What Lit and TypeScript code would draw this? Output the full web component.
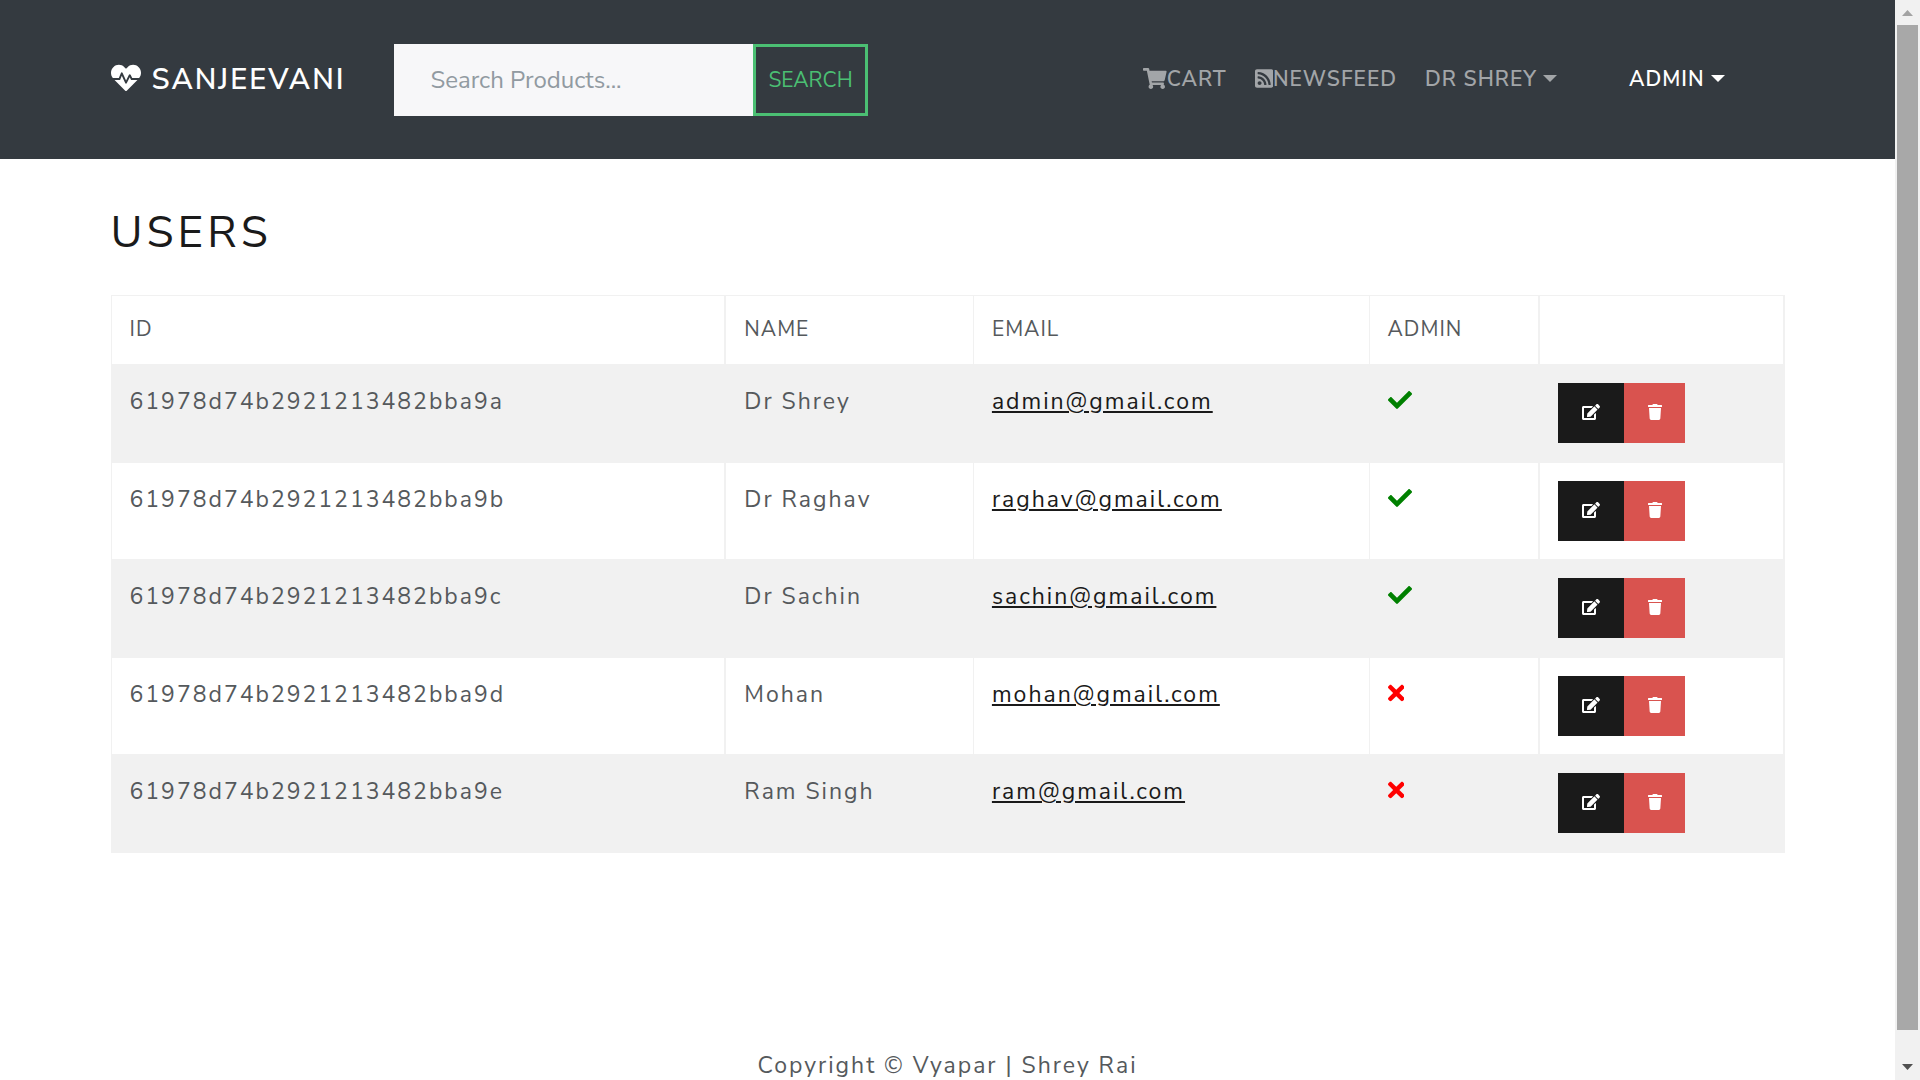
import { LitElement, html, css, svg } from "lit";
import { customElement, state } from "lit/decorators.js";

interface Icon {
  width: number;
  path: string;
}

const ICONS: Record<string, Icon> = {
  heartbeat: {
    width: 512,
    path: "M320.2 243.8l-49.7 99.4c-6 12.1-23.4 11.7-28.9-.6l-56.9-126.3-30 71.7H60.6l182.5 186.5c7.1 7.3 18.6 7.3 25.7 0L451.4 288H342.3l-22.1-44.2zM473.7 73.9l-2.4-2.5c-51.5-52.6-135.8-52.6-187.4 0L256 100l-27.9-28.5c-51.5-52.7-135.9-52.7-187.4 0l-2.4 2.4C-10.4 123.7-12.5 203 31 256h102.4l35.9-86.2c5.4-12.9 23.6-13.2 29.4-.4l58.2 129.3 49-97.9c5.9-11.8 22.7-11.8 28.6 0l27.6 55.2H481c43.5-53 41.4-132.3-7.3-182.1z",
  },
  cart: {
    width: 576,
    path: "M528.12 301.319l47.273-208C578.806 78.301 567.391 64 551.99 64H159.208l-9.166-44.81C147.758 8.021 137.93 0 126.529 0H24C10.745 0 0 10.745 0 24v16c0 13.255 10.745 24 24 24h69.883l70.248 343.435C147.325 417.1 136 435.222 136 456c0 30.928 25.072 56 56 56s56-25.072 56-56c0-15.674-6.447-29.835-16.824-40h209.647C430.447 426.165 424 440.326 424 456c0 30.928 25.072 56 56 56s56-25.072 56-56c0-22.172-12.888-41.332-31.579-50.405l5.517-24.276c3.413-15.018-8.002-29.319-23.403-29.319H218.117l-6.545-32h293.145c11.206 0 20.92-7.754 23.403-18.681z",
  },
  rss: {
    width: 448,
    path: "M400 32H48C21.49 32 0 53.49 0 80v352c0 26.51 21.49 48 48 48h352c26.51 0 48-21.49 48-48V80c0-26.51-21.49-48-48-48zM112 416c-26.51 0-48-21.49-48-48s21.49-48 48-48 48 21.49 48 48-21.49 48-48 48zm157.533 0h-34.335c-6.011 0-11.051-4.636-11.442-10.634-5.214-80.05-69.243-143.92-149.123-149.123-5.997-.39-10.633-5.431-10.633-11.441v-34.335c0-6.535 5.468-11.777 11.994-11.425 110.546 5.974 198.997 94.536 204.964 204.964.352 6.526-4.89 11.994-11.425 11.994zm103.027 0h-34.334c-6.161 0-11.175-4.882-11.427-11.038-5.598-136.535-115.204-246.161-251.76-251.76C68.882 152.949 64 147.935 64 141.774V107.44c0-6.454 5.338-11.664 11.787-11.432 167.83 6.025 302.21 141.191 308.205 308.205.232 6.449-4.978 11.787-11.432 11.787z",
  },
  check: {
    width: 512,
    path: "M173.898 439.404l-166.4-166.4c-9.997-9.997-9.997-26.206 0-36.204l36.203-36.204c9.997-9.998 26.207-9.998 36.204 0L192 312.69 432.095 72.596c9.997-9.997 26.207-9.997 36.204 0l36.203 36.204c9.997 9.997 9.997 26.206 0 36.204l-294.4 294.401c-9.998 9.997-26.207 9.997-36.204-.001z",
  },
  times: {
    width: 352,
    path: "M242.72 256l100.07-100.07c12.28-12.28 12.28-32.19 0-44.48l-22.24-22.24c-12.28-12.28-32.19-12.28-44.48 0L176 189.28 75.93 89.21c-12.28-12.28-32.19-12.28-44.48 0L9.21 111.45c-12.28 12.28-12.28 32.19 0 44.48L109.28 256 9.21 356.07c-12.28 12.28-12.28 32.19 0 44.48l22.24 22.24c12.28 12.28 32.2 12.28 44.48 0L176 322.72l100.07 100.07c12.28 12.28 32.2 12.28 44.48 0l22.24-22.24c12.28-12.28 12.28-32.19 0-44.48L242.72 256z",
  },
  edit: {
    width: 576,
    path: "M402.6 83.2l90.2 90.2c3.8 3.8 3.8 10 0 13.8L274.4 405.6l-92.8 10.3c-12.4 1.4-22.9-9.1-21.5-21.5l10.3-92.8L388.8 83.2c3.8-3.8 10-3.8 13.8 0zm162-22.9l-48.8-48.8c-15.2-15.2-39.9-15.2-55.2 0l-35.4 35.4c-3.8 3.8-3.8 10 0 13.8l90.2 90.2c3.8 3.8 10 3.8 13.8 0l35.4-35.4c15.2-15.3 15.2-40 0-55.2zM384 346.2V448H64V128h229.8c3.2 0 6.2-1.3 8.5-3.5l40-40c7.6-7.6 2.2-20.5-8.5-20.5H48C21.5 64 0 85.5 0 112v352c0 26.5 21.5 48 48 48h352c26.5 0 48-21.5 48-48V306.2c0-10.7-12.9-16-20.5-8.5l-40 40c-2.2 2.3-3.5 5.3-3.5 8.5z",
  },
  trash: {
    width: 448,
    path: "M432 32H312l-9.4-18.7A24 24 0 0 0 281.1 0H166.8a23.72 23.72 0 0 0-21.4 13.3L136 32H16A16 16 0 0 0 0 48v32a16 16 0 0 0 16 16h416a16 16 0 0 0 16-16V48a16 16 0 0 0-16-16zM53.2 467a48 48 0 0 0 47.9 45h245.8a48 48 0 0 0 47.9-45L416 128H32z",
  },
};

const icon = (name: keyof typeof ICONS, kind = "") => html`
  <svg class="icon ${kind}" viewBox="0 0 ${ICONS[name].width} 512" aria-hidden="true">
    ${svg`<path d=${ICONS[name].path}></path>`}
  </svg>`;

interface User {
  id: string;
  name: string;
  email: string;
  admin: boolean;
}

@customElement("app-root")
export class AppRoot extends LitElement {
  @state() private users: User[] = [
    { id: "61978d74b2921213482bba9a", name: "Dr Shrey", email: "admin@gmail.com", admin: true },
    { id: "61978d74b2921213482bba9b", name: "Dr Raghav", email: "raghav@gmail.com", admin: true },
    { id: "61978d74b2921213482bba9c", name: "Dr Sachin", email: "sachin@gmail.com", admin: true },
    { id: "61978d74b2921213482bba9d", name: "Mohan", email: "mohan@gmail.com", admin: false },
    { id: "61978d74b2921213482bba9e", name: "Ram Singh", email: "ram@gmail.com", admin: false },
  ];

  static styles = css`
    :host {
      display: flex;
      height: 100vh;
      overflow: hidden;
      background: #fff;
      color: #55595c;
      font: 400 23px/38px "Nunito Sans", Nunito, Lato, sans-serif;
      letter-spacing: 2px;
    }
    * {
      box-sizing: border-box;
    }
    button,
    input {
      font: inherit;
      letter-spacing: normal;
      border: 0;
      border-radius: 0;
      margin: 0;
      padding: 0;
      background: none;
      color: inherit;
    }
    button {
      cursor: pointer;
    }
    .icon {
      display: block;
      flex: none;
      height: 24px;
      fill: currentColor;
    }
    .page {
      flex: 1;
      min-width: 0;
      display: flex;
      flex-direction: column;
    }
    .container {
      width: 100%;
      max-width: 1710px;
      margin: 0 auto;
      padding: 0 18px;
    }
    .navbar {
      background: #343a40;
      padding: 44px 0 43px;
      color: #fff;
    }
    .bar {
      display: flex;
      align-items: center;
      height: 72px;
    }
    .brand {
      display: flex;
      align-items: center;
      gap: 11px;
      margin-right: 49px;
      font-size: 29px;
      font-weight: 600;
      color: #fff;
      text-decoration: none;
    }
    .icon.large {
      height: 30px;
      margin-bottom: 4px;
    }
    .search {
      display: flex;
    }
    .search input {
      width: 359px;
      height: 72px;
      padding: 0 36px;
      background: #f7f7f9;
      color: #55595c;
      font-size: 24px;
    }
    .search input::placeholder {
      color: #919aa1;
      opacity: 1;
    }
    .search button {
      height: 72px;
      padding: 0 12px;
      border: 3px solid #4bbf73;
      color: #4bbf73;
      font-size: 21px;
    }
    .nav {
      display: flex;
      align-items: center;
      gap: 28px;
      margin-left: auto;
      padding: 0 60px 2px 0;
      font-size: 21px;
      font-weight: 600;
    }
    .nav a,
    .nav button {
      display: flex;
      align-items: center;
      letter-spacing: 1px;
      color: #a2a5a8;
      text-decoration: none;
    }
    .nav .current {
      margin-left: 44px;
      color: #fff;
    }
    .nav .icon {
      height: 21px;
      margin-bottom: 2px;
    }
    .caret {
      margin: 0 0 2px 6px;
      border: 7px solid transparent;
      border-top-color: currentColor;
      border-bottom: 0;
    }
    main {
      flex: 1;
    }
    h1 {
      margin: 47px 0 34px;
      color: #1a1a1a;
      font-size: 44px;
      line-height: 55px;
      font-weight: 400;
      letter-spacing: 4px;
    }
    table {
      width: 100%;
      table-layout: fixed;
      border-spacing: 0;
      border-left: 1px solid #f1f1f1;
      border-top: 1px solid #f1f1f1;
    }
    .col-id {
      width: 36.75%;
    }
    .col-name {
      width: 14.8%;
    }
    .col-email {
      width: 23.65%;
    }
    .col-admin {
      width: 10.2%;
    }
    th,
    td {
      padding: 18px;
      border-right: 1px solid #f1f1f1;
      text-align: left;
      vertical-align: top;
    }
    .wide {
      border-right-width: 2px;
    }
    th {
      padding-bottom: 20px;
      font-size: 21px;
      font-weight: 400;
      line-height: 30px;
      letter-spacing: 1px;
    }
    tbody tr:nth-child(odd) {
      background: #f1f1f1;
    }
    tbody tr:nth-child(odd) td {
      border-top: 1px solid #f1f1f1;
      border-bottom: 2px solid #f1f1f1;
    }
    td a {
      color: #1a1a1a;
    }
    .flag {
      display: flex;
      align-items: center;
      height: 34px;
      color: #008000;
    }
    .flag.no {
      color: #f00;
    }
    .actions {
      display: flex;
    }
    .actions button {
      display: flex;
      align-items: center;
      height: 60px;
      padding: 0 24px 2px;
      background: #1a1a1a;
      color: #fff;
    }
    .actions .delete {
      padding-right: 23px;
      background: #d9534f;
    }
    .actions .icon {
      height: 16px;
    }
    footer {
      line-height: 28px;
      text-align: center;
    }
    .scrollbar {
      flex: none;
      width: 25px;
      display: flex;
      flex-direction: column;
      align-items: center;
      background: #f1f1f1;
      color: #505050;
    }
    .scrollbar svg {
      flex: none;
      width: 25px;
      height: 25px;
      fill: currentColor;
    }
    .scrollbar .up {
      color: #a3a3a3;
    }
    .track {
      flex: 1;
      width: 21px;
      padding-bottom: 25px;
    }
    .thumb {
      height: 100%;
      background: #a8a8a8;
    }
  `;

  private remove(id: string) {
    this.users = this.users.filter((u) => u.id !== id);
  }

  private row(u: User) {
    return html`
      <tr>
        <td class="wide">${u.id}</td>
        <td>${u.name}</td>
        <td><a href="mailto:${u.email}">${u.email}</a></td>
        <td class="wide">
          <span class="flag ${u.admin ? "" : "no"}" role="img" aria-label=${u.admin ? "Yes" : "No"}>
            ${icon(u.admin ? "check" : "times")}
          </span>
        </td>
        <td class="wide">
          <div class="actions">
            <button type="button" aria-label="Edit">${icon("edit")}</button>
            <button type="button" class="delete" aria-label="Delete" @click=${() => this.remove(u.id)}>
              ${icon("trash")}
            </button>
          </div>
        </td>
      </tr>`;
  }

  render() {
    return html`
      <div class="page">
        <header class="navbar">
          <div class="container bar">
            <a class="brand" href="#/">${icon("heartbeat", "large")}<span>SANJEEVANI</span></a>
            <form class="search" role="search" @submit=${(e: Event) => e.preventDefault()}>
              <input type="text" aria-label="Search Products" placeholder="Search Products..." />
              <button type="submit">SEARCH</button>
            </form>
            <nav class="nav">
              <a href="#/cart">${icon("cart")}CART</a>
              <a href="#/newsfeed">${icon("rss")}NEWSFEED</a>
              <button type="button" aria-haspopup="true">DR SHREY<span class="caret"></span></button>
              <button type="button" class="current" aria-haspopup="true">ADMIN<span class="caret"></span></button>
            </nav>
          </div>
        </header>
        <main>
          <div class="container">
            <h1>USERS</h1>
            <table>
              <colgroup>
                <col class="col-id" />
                <col class="col-name" />
                <col class="col-email" />
                <col class="col-admin" />
                <col />
              </colgroup>
              <thead>
                <tr>
                  <th class="wide" scope="col">ID</th>
                  <th scope="col">NAME</th>
                  <th scope="col">EMAIL</th>
                  <th class="wide" scope="col">ADMIN</th>
                  <th class="wide"></th>
                </tr>
              </thead>
              <tbody>
                ${this.users.map((u) => this.row(u))}
              </tbody>
            </table>
          </div>
        </main>
        <footer>Copyright © Vyapar | Shrey Rai</footer>
      </div>
      <div class="scrollbar" aria-hidden="true">
        <svg class="up" viewBox="0 0 25 25"><path d="M7 16L12.5 10L18 16Z"></path></svg>
        <div class="track"><div class="thumb"></div></div>
        <svg viewBox="0 0 25 25"><path d="M7 9L12.5 15L18 9Z"></path></svg>
      </div>`;
  }
}
